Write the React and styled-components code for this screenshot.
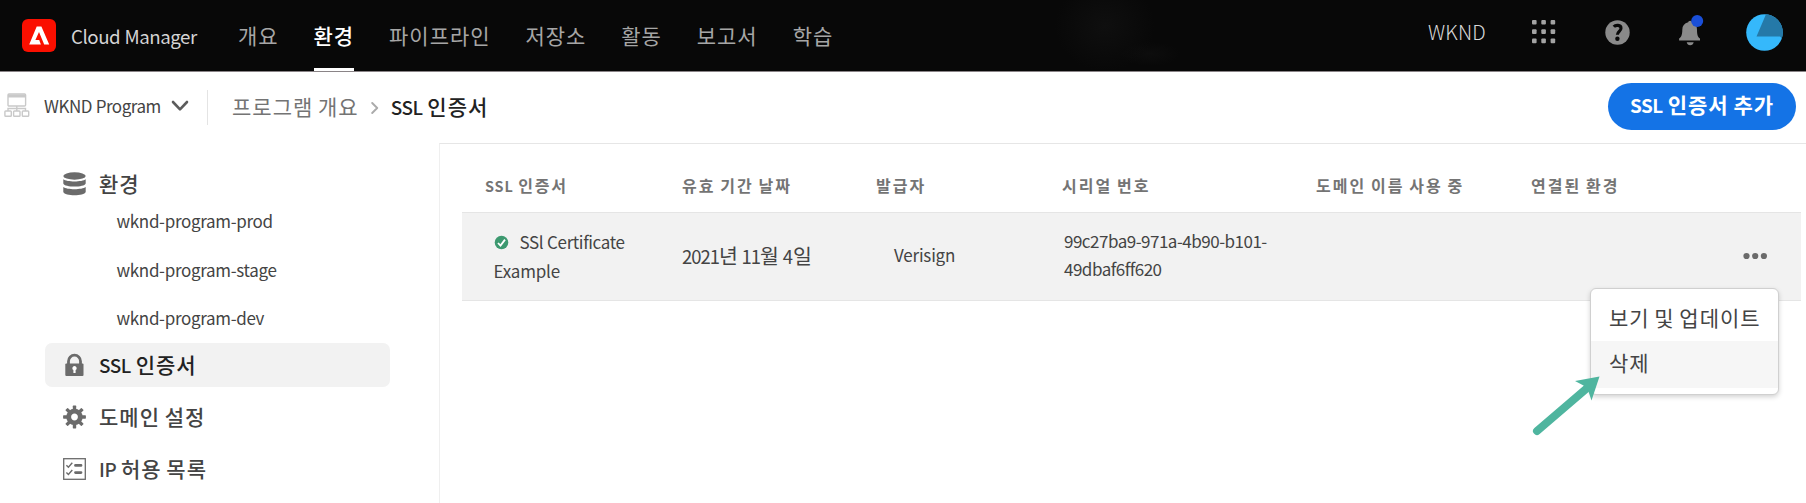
import React from 'react';
import styled, { createGlobalStyle } from 'styled-components';

const Global = createGlobalStyle`
  * { box-sizing: border-box; }
  body { margin: 0; background: #fff; font-family: "Noto Sans CJK KR", "Noto Sans", sans-serif; color: #444; }
  ul { list-style: none; margin: 0; padding: 0; }
  button { font: inherit; border: 0; cursor: pointer; }
  svg { display: block; flex: none; }
`;

const Page = styled.div`
  height: 503px;
  display: flex;
  flex-direction: column;
  overflow: hidden;
  white-space: nowrap;
`;

const Text = styled.span`
  font-size: ${(p) => p.$size || 21}px;
  font-weight: ${(p) => p.$weight || 400};
  letter-spacing: ${(p) => p.$track ?? 1}px;
  word-spacing: ${(p) => p.$word ?? -1}px;
  color: ${(p) => p.$color || 'inherit'};
`;

const Latin = styled.span`
  font-size: 0.9em;
  letter-spacing: ${(p) => p.$track ?? -0.4}px;
`;

const Header = styled.header`
  height: 72px;
  flex: none;
  display: flex;
  padding: 0 23px 0 22px;
  border-bottom: 1px solid #8a8487;
  background:
    radial-gradient(ellipse 50px 45px at 1105px 26px, #0f0f0f 0%, rgba(15, 15, 15, 0) 100%),
    radial-gradient(ellipse 30px 12px at 1150px 54px, #0d0d0d 0%, rgba(13, 13, 13, 0) 100%),
    #080808;
`;

const Brand = styled.div`
  display: flex;
  align-items: center;
  gap: 15px;
  width: 216px;
  color: #d4d4d4;
`;

const Nav = styled.nav`
  display: flex;
  gap: 35px;
  flex: 1;
`;

const NavItem = styled.a`
  height: 71px;
  line-height: 70px;
  font-size: 21px;
  letter-spacing: 0.95px;
  color: ${(p) => (p.$active ? '#fff' : '#a6a6a6')};
  font-weight: ${(p) => (p.$active ? 500 : 400)};
  border-bottom: 3px solid ${(p) => (p.$active ? '#fff' : 'transparent')};
`;

const Tools = styled.div`
  display: flex;
  align-items: center;
  height: 64px;
  color: #8a8a8a;
`;

const Org = styled.span`
  width: 104px;
  padding-bottom: 2px;
  font-size: 20px;
  font-weight: 300;
  letter-spacing: 0.2px;
  color: #d8d8d8;
`;

const Tool = styled.div`
  width: ${(p) => p.$width}px;
`;

const SubHeader = styled.div`
  height: 71px;
  flex: none;
  display: flex;
  align-items: center;
  padding: 0 10px 1px 4px;
`;

const ProgramPicker = styled.div`
  display: flex;
  align-items: center;
  width: 204px;
  height: 35px;
  border-right: 1px solid #e4e4e4;
  gap: 10px;
  padding-bottom: 3px;
  margin-right: 24px;
  > span { padding-left: 4px; }
`;

const Crumbs = styled.div`
  display: flex;
  align-items: center;
  gap: 12px;
  flex: 1;
  padding-bottom: 2px;
  > svg { margin-top: 4px; }
`;

const AddButton = styled.button`
  width: 188px;
  height: 47px;
  margin-bottom: 2px;
  border-radius: 24px;
  background: #1473e6;
  color: #fff;
  padding: 0 0 4px;
  text-align: center;
`;

const Body = styled.div`
  display: flex;
  flex: 1;
`;

const Sidebar = styled.aside`
  width: 439px;
  padding: 19px 48px 0 45px;
`;

const SideItem = styled.a`
  display: flex;
  align-items: center;
  width: 345px;
  height: 44px;
  margin-bottom: ${(p) => p.$after ?? 8}px;
  padding-left: 17.5px;
  gap: 13.5px;
  border-radius: 7px;
  background: ${(p) => (p.$active ? '#f2f2f2' : 'transparent')};
  color: ${(p) => (p.$active ? '#222' : '#444')};
  > span { margin-bottom: 3px; }
`;

const SubList = styled.ul`
  padding: 0 0 1px 71.5px;
  margin-top: -6px;
  li { height: 48.7px; line-height: 42px; }
  li:last-child { height: 45px; }
`;

const Main = styled.main`
  flex: 1;
  border-top: 1px solid #e6e6e6;
  border-left: 1px solid #efefef;
  padding: 0 5px 0 22px;
`;

const Columns = styled.div`
  display: grid;
  grid-template-columns: 220px 194px 186px 254px 215px 212px 1fr;
`;

const TableHead = styled(Columns)`
  height: 68px;
  line-height: 82px;
  color: #747474;
  > span:first-child { padding-left: 23px; }
`;

const TableRow = styled(Columns)`
  height: 89px;
  align-items: center;
  background: #f2f2f2;
  border: solid #e5e5e5;
  border-width: 1px 0;
  color: #444;
`;

const Cell = styled.div`
  padding-left: ${(p) => p.$inset || 0}px;
  padding-bottom: ${(p) => p.$lift || 0}px;
  line-height: 28.3px;
`;

const StatusLine = styled.div`
  display: flex;
  align-items: center;
  gap: 11px;
`;

const MoreCell = styled.div`
  position: relative;
  padding-bottom: 1px;
`;

const Menu = styled.div`
  position: absolute;
  top: 36px;
  left: -153px;
  width: 188.5px;
  height: 107px;
  padding-top: 5px;
  border: 1px solid #d0d0d0;
  border-radius: 6px;
  background: #fff;
  box-shadow: 0 2px 5px rgba(0, 0, 0, 0.18);
  color: #444;
`;

const MenuItem = styled.div`
  height: 47px;
  line-height: ${(p) => (p.$active ? 43 : 46)}px;
  padding-left: 18px;
  background: ${(p) => (p.$active ? '#f6f6f6' : 'transparent')};
`;

const Pointer = styled.svg`
  position: absolute;
  left: -211px;
  top: 121px;
`;

const AdobeLogo = () => (
  <svg width="34" height="33" viewBox="0 0 34 33">
    <rect width="34" height="33" rx="6" fill="#fa0f00" />
    <path fill="#fff" d="M14.7 7.500h4.700L27.200 25.500h-5L17 13l-3.600 8h3.800l1.700 4.500H7.200z" />
  </svg>
);

const GridIcon = () => (
  <svg width="24" height="24" viewBox="0 0 24 24" fill="#a3a3a3">
    {[0, 9.3, 18.6].map((y) => [0, 9.3, 18.6].map((x) => (
      <rect key={`${x}-${y}`} x={x} y={y} width="4.6" height="4.6" rx="1" />
    )))}
  </svg>
);

const HelpIcon = () => (
  <svg width="25" height="25" viewBox="0 0 25 25" fill="none">
    <circle cx="12.5" cy="12.5" r="12.2" fill="#8a8a8a" />
    <path d="M8.8 6.8C10.5 4.8 16 4.6 16 8.2c0 3-3.6 3.3-3.6 6.5" stroke="#080808" strokeWidth="3.1" />
    <circle cx="12.4" cy="18.7" r="2.2" fill="#080808" />
  </svg>
);

const BellIcon = () => (
  <svg width="26" height="34" viewBox="0 0 26 34">
    <path fill="#8a8a8a" d="M9.200 7.200q0-1.500 1.900-1.500t1.900 1.500c3.600 1 5 3.700 5 7.500 0 5 .8 7.300 3 8.900v2H.1v-2c2.200-1.600 3.200-3.900 3.200-8.900 0-3.800 2-6.500 5.900-7.500zM7.700 27.200h7q-.7 3-3.500 3t-3.500-3z" />
    <circle cx="18.200" cy="5.200" r="0" fill="none" />
    <circle cx="18.200" cy="6" r="6" fill="#1a4fd8" />
  </svg>
);

const Avatar = () => (
  <svg width="37" height="37" viewBox="0 0 37 37">
    <circle cx="18.500" cy="18.500" r="18.300" fill="#35b8fb" />
    <path fill="#2579a8" d="M20 .2A18.300 18.300 0 0 1 35.900 24.300L34 22.400H10.500z" />
  </svg>
);

const ProgramIcon = () => (
  <svg width="26" height="25" viewBox="0 0 26 25" fill="none" stroke="#c9c9c9" strokeWidth="1.400">
    <rect x="4" y="1" width="17.600" height="12" rx="1" />
    <path d="M4 3h17.600" strokeWidth="3" />
    <path d="M12.800 13v5M4 18v-2.500h17.500V18" />
    <rect x=".9" y="18" width="6.400" height="5.200" rx=".8" />
    <rect x="9.600" y="18" width="6.400" height="5.200" rx=".8" />
    <rect x="18.300" y="18" width="6.400" height="5.200" rx=".8" />
  </svg>
);

const ChevronDown = () => (
  <svg width="18" height="12" viewBox="0 0 18 12" fill="none" stroke="#5c5c5c" strokeWidth="2.600" strokeLinecap="round" strokeLinejoin="round">
    <path d="M2 2l7 7.300L16 2" />
  </svg>
);

const ChevronRight = () => (
  <svg width="8" height="14" viewBox="0 0 8 14" fill="none" stroke="#ababab" strokeWidth="1.900" strokeLinecap="round" strokeLinejoin="round">
    <path d="M1.200 2l5 5-5 5" />
  </svg>
);

const DatabaseIcon = () => (
  <svg width="23" height="24" viewBox="0 0 23 24" fill="#6b6b6b">
    <ellipse cx="11.500" cy="4" rx="11.200" ry="3.700" />
    <path d="M.3 7.200c3.500 2.900 18.900 2.900 22.400 0v4.200c-1.500 4.200-20.900 4.200-22.400 0z" />
    <path d="M.3 15c3.500 2.900 18.900 2.900 22.400 0v5c-1.500 4.300-20.900 4.300-22.400 0z" />
  </svg>
);

const LockIcon = () => (
  <svg width="23" height="24" viewBox="0 0 23 24">
    <path d="M5.500 11V8.200a6 6 0 0 1 12 0V11" fill="none" stroke="#6b6b6b" strokeWidth="2.800" />
    <rect x="2.300" y="10.500" width="18.200" height="12.500" rx="1" fill="#6b6b6b" />
    <path d="M11.500 13a2.200 2.200 0 0 1 1.100 4.100V20h-2.200v-2.900A2.200 2.200 0 0 1 11.500 13z" fill="#fff" />
  </svg>
);

const GearIcon = () => (
  <svg width="23" height="24" viewBox="-11.500 -12 23 24">
    {[0, 45, 90, 135, 180, 225, 270, 315].map((a) => (
      <rect key={a} x="-1.700" y="-11.400" width="3.400" height="5" rx=".6" fill="#6b6b6b" transform={`rotate(${a})`} />
    ))}
    <circle r="5.800" fill="none" stroke="#6b6b6b" strokeWidth="4.800" />
  </svg>
);

const ListIcon = () => (
  <svg width="23" height="22" viewBox="0 0 23 22" fill="none" stroke="#6b6b6b">
    <rect x=".7" y=".7" width="21.600" height="20.600" strokeWidth="1.300" />
    <path d="M12.500 7.400h5.500M12.500 14.600h5.500" strokeWidth="2.800" strokeLinecap="round" />
    <path d="M3.400 7.300l2 2 3.900-4.500M3.400 14.500l2 2 3.900-4.500" strokeWidth="1.400" />
  </svg>
);

const CheckIcon = () => (
  <svg width="15" height="15" viewBox="0 0 15 15" fill="none">
    <circle cx="7.500" cy="7.500" r="6.800" fill="#3d9970" />
    <path d="M4 8l2.500 2.600 4.500-6" stroke="#fff" strokeWidth="1.800" />
  </svg>
);

const MoreIcon = () => (
  <svg width="25" height="8" viewBox="0 0 25 8" fill="#6b6b6b">
    <circle cx="3.500" cy="4" r="3.100" />
    <circle cx="12.200" cy="4" r="3.100" />
    <circle cx="20.900" cy="4" r="3.100" />
  </svg>
);

const NAV = ['개요', '환경', '파이프라인', '저장소', '활동', '보고서', '학습'];
const ENVIRONMENTS = ['wknd-program-prod', 'wknd-program-stage', 'wknd-program-dev'];
const HEADINGS = ['유효 기간 날짜', '발급자', '시리얼 번호', '도메인 이름 사용 중', '연결된 환경'];

export default function App() {
  return (
    <Page>
      <Global />
      <Header>
        <Brand>
          <AdobeLogo />
          <Text $size={18.7} $track={-0.45} $word={0.5}>Cloud Manager</Text>
        </Brand>
        <Nav>
          {NAV.map((n) => <NavItem key={n} $active={n === '환경'}>{n}</NavItem>)}
        </Nav>
        <Tools>
          <Org>WKND</Org>
          <Tool $width={73}><GridIcon /></Tool>
          <Tool $width={74}><HelpIcon /></Tool>
          <Tool $width={67}><BellIcon /></Tool>
          <Avatar />
        </Tools>
      </Header>
      <SubHeader>
        <ProgramPicker>
          <ProgramIcon />
          <Text $size={17} $track={-0.5} $word={0.5}>WKND Program</Text>
          <ChevronDown />
        </ProgramPicker>
        <Crumbs>
          <Text $color="#747474">프로그램 개요</Text>
          <ChevronRight />
          <Text $weight={500} $color="#222"><Latin>SSL</Latin> 인증서</Text>
        </Crumbs>
        <AddButton><Text $weight={700}><Latin>SSL</Latin> 인증서 추가</Text></AddButton>
      </SubHeader>
      <Body>
        <Sidebar>
          <SideItem $after={0}><DatabaseIcon /><Text $weight={500}>환경</Text></SideItem>
          <SubList>
            {ENVIRONMENTS.map((e) => <li key={e}><Text $size={17} $track={-0.33}>{e}</Text></li>)}
          </SubList>
          <SideItem $active><LockIcon /><Text $weight={500}><Latin>SSL</Latin> 인증서</Text></SideItem>
          <SideItem><GearIcon /><Text $weight={500}>도메인 설정</Text></SideItem>
          <SideItem><ListIcon /><Text $weight={500}><Latin>IP</Latin> 허용 목록</Text></SideItem>
        </Sidebar>
        <Main>
          <TableHead>
            <Text $size={16} $weight={700} $track={1.8}><Latin $track={0.9}>SSL</Latin> 인증서</Text>
            {HEADINGS.map((h) => <Text key={h} $size={16} $weight={700} $track={2} $word={-0.8}>{h}</Text>)}
          </TableHead>
          <TableRow>
            <Cell $inset={31.5}>
              <StatusLine><CheckIcon /><Text $size={17} $track={-0.38} $word={0.5}>SSl Certificate</Text></StatusLine>
              <Text $size={17} $track={-0.2}>Example</Text>
            </Cell>
            <Cell>
              <Text $size={20.5} $track={0.1}>
                <Latin $track={-1}>2021</Latin>년 <Latin $track={-1}>11</Latin>월 <Latin $track={0}>4</Latin>일
              </Text>
            </Cell>
            <Cell $inset={18} $lift={2}><Text $size={17} $track={-0.2}>Verisign</Text></Cell>
            <Cell $inset={2} $lift={3}>
              <Text $size={17} $track={-0.5}>99c27ba9-971a-4b90-b101-<br />49dbaf6ff620</Text>
            </Cell>
            <Cell />
            <Cell />
            <MoreCell>
              <MoreIcon />
              <Menu>
                <MenuItem>
                  <Text>보기 및 업데이트</Text>
                </MenuItem>
                <MenuItem $active>
                  <Text>삭제</Text>
                </MenuItem>
              </Menu>
              <Pointer width="72" height="64" viewBox="0 0 72 64">
                <path d="M5 58L54 16" stroke="#4fb59f" strokeWidth="8" strokeLinecap="round" fill="none" />
                <path d="M67.500 3.500L59.500 27.500 56.500 18.500 51.500 12.500 43 8z" fill="#4fb59f" />
              </Pointer>
            </MoreCell>
          </TableRow>
        </Main>
      </Body>
    </Page>
  );
}
